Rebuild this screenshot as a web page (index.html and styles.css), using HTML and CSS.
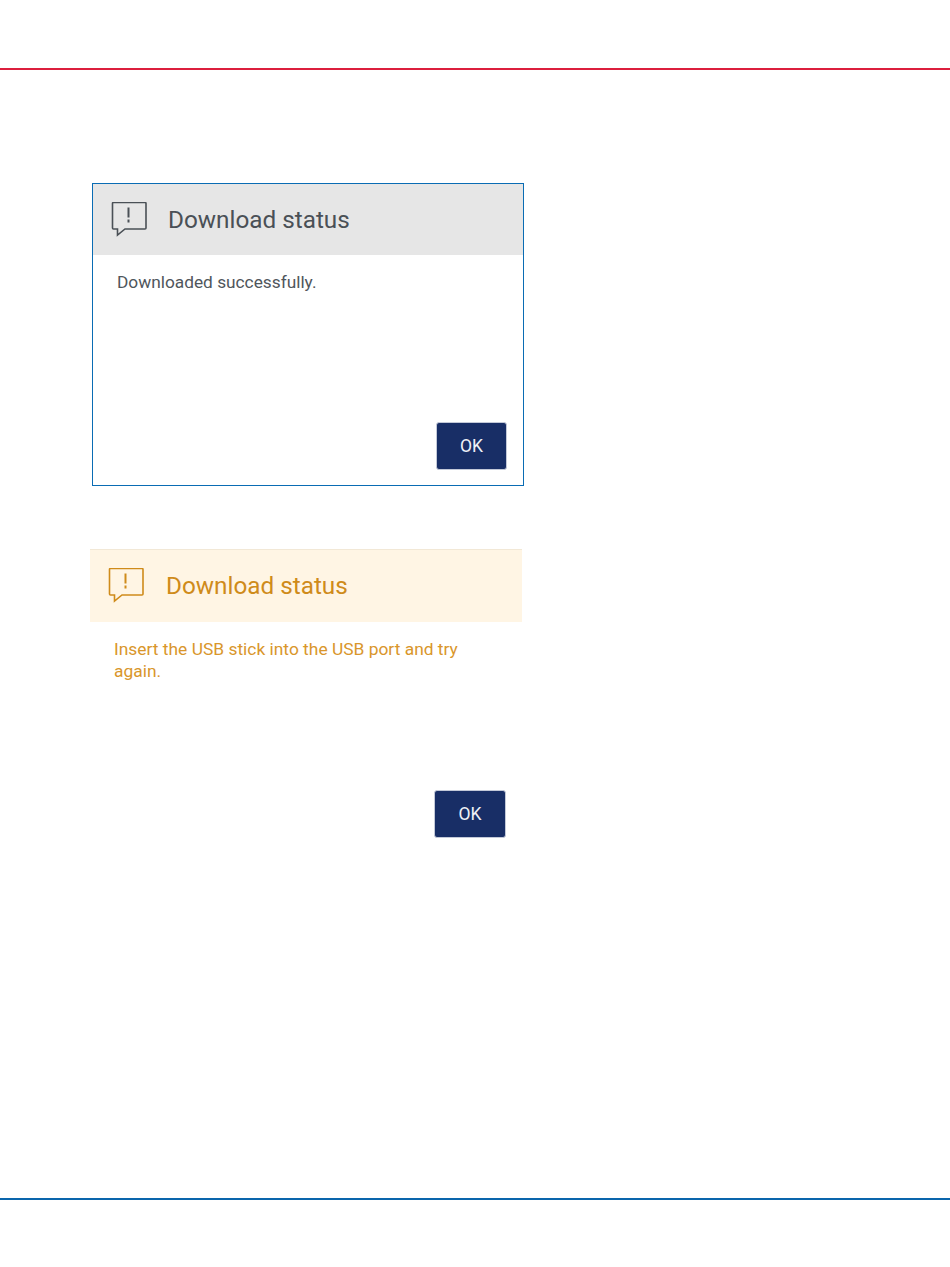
FILE: index.html
```html
<!DOCTYPE html>
<html lang="en">
<head>
<meta charset="utf-8">
<title>Download status</title>
<link rel="stylesheet" href="styles.css">
</head>
<body>
<div class="page">
  <header class="top-rule"></header>
  <main class="content">
    <section class="dialog dialog-info">
      <div class="dialog-head">
        <svg class="icon" width="38" height="36" viewBox="0 1 38 36" fill="none" stroke="currentColor" stroke-width="1.6">
          <path d="M3.5 1.5H35a1 1 0 0 1 1 1V27a1 1 0 0 1-1 1H15L7.5 34V28H3.5a1 1 0 0 1-1-1V2.5a1 1 0 0 1 1-1Z"/>
          <path d="M18.5 6.5V16.5M18.5 18.5V21.5" stroke-width="2"/>
        </svg>
        <h2 class="dialog-title">Download status</h2>
      </div>
      <p class="dialog-text">Downloaded successfully.</p>
      <div class="dialog-actions"><button class="btn">OK</button></div>
    </section>
    <section class="dialog dialog-warn">
      <div class="dialog-head">
        <svg class="icon" width="38" height="36" viewBox="0 1 38 36" fill="none" stroke="currentColor" stroke-width="1.6">
          <path d="M3.5 1.5H35a1 1 0 0 1 1 1V27a1 1 0 0 1-1 1H15L7.5 34V28H3.5a1 1 0 0 1-1-1V2.5a1 1 0 0 1 1-1Z"/>
          <path d="M18.5 6.5V16.5M18.5 18.5V21.5" stroke-width="2"/>
        </svg>
        <h2 class="dialog-title">Download status</h2>
      </div>
      <p class="dialog-text">Insert the USB stick into the USB port and try again.</p>
      <div class="dialog-actions"><button class="btn">OK</button></div>
    </section>
  </main>
  <footer class="bottom-rule"></footer>
</div>
</body>
</html>
```
FILE: styles.css
```css
* { box-sizing: border-box; }
html, body { margin: 0; padding: 0; background: #fff; }
body { font-family: Roboto, "Liberation Sans", sans-serif; }
.page { height: 1267px; display: flex; flex-direction: column; overflow: hidden; }
.top-rule { height: 70px; flex: none; border-bottom: 2px solid #dc1f3d; }
.content { flex: 1; display: flex; flex-direction: column; align-items: flex-start; padding-top: 113px; }
.bottom-rule { height: 69px; flex: none; border-top: 2px solid #0a65ac; }
.dialog { width: 432px; display: flex; flex-direction: column; }
.dialog-head { height: 71px; display: flex; align-items: center; flex: none; padding-left: 17px; }
.icon { flex: none; }
.dialog-title { margin: 0; font-size: 24.3px; font-weight: 400; line-height: 30px; }
.dialog-text { margin: 0; font-size: 17.3px; line-height: 22px; height: 167px; }
.dialog-actions { display: flex; justify-content: flex-end; }
.btn { width: 71px; height: 48px; border: 1px solid #c3c9d8; border-radius: 3px; background: #182e66; color: #eef1f6; font: 400 17.5px Roboto, "Liberation Sans", sans-serif; padding: 0; }
.dialog-info { height: 303px; margin-left: 92px; border: 1px solid #0a6cb4; }
.dialog-info .dialog-head { background: #e6e6e6; gap: 20px; color: #4a5056; }
.dialog-info .dialog-text { color: #50565c; padding: 16px 24px 0; }
.dialog-info .dialog-actions { padding-right: 16px; }
.dialog-warn { margin-left: 90px; margin-top: 63px; }
.dialog-warn .dialog-head { background: #fff5e4; border-top: 1px solid #f2e8d6; gap: 21px; height: 73px; color: #cf8b1a; }
.dialog-warn .dialog-text { color: #d9962b; font-size: 17.4px; padding: 16px 48px 0 24px; height: 168px; }
.dialog-warn .dialog-actions { padding-right: 16px; }
.dialog-warn .btn { width: 72px; }
```
